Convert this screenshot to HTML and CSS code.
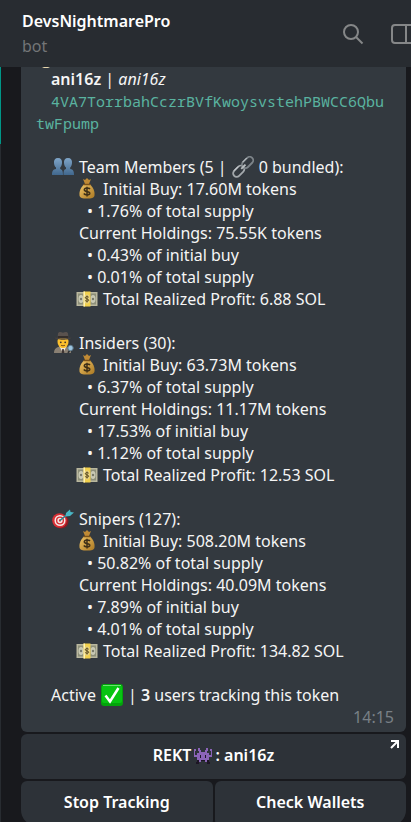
FILE: index.html
```
<!DOCTYPE html>
<html lang="en">
<head>
<meta charset="UTF-8">
<meta name="viewport" content="width=device-width, initial-scale=1.0">
<title>DevsNightmarePro</title>
<link rel="stylesheet" href="styles.css">
</head>
<body>

<!-- icons used more than once -->
<svg class="sprite" aria-hidden="true">
    <defs>
        <linearGradient id="gold" x1="0" y1="0" x2="1" y2="1">
            <stop offset="0" stop-color="#f3c768"/>
            <stop offset="1" stop-color="#a97722"/>
        </linearGradient>
        <linearGradient id="people" x1="0" y1="0" x2="0" y2="1">
            <stop offset="0" stop-color="#7fa5c8"/>
            <stop offset="1" stop-color="#41688e"/>
        </linearGradient>
    </defs>
    <symbol id="bag" viewBox="0 0 22 22">
        <path d="M7 1l2 1 2-2 2 2 2-1-2 5H9z" fill="#c08a35"/>
        <path d="M8.500 6C5 9 3 13 3.500 17.500c.3 2.500 3 3 7.500 3s7.200-.5 7.500-3c.5-4.500-1.500-8.500-5-11.500z" fill="url(#gold)"/>
        <path d="M8 6.500h6" stroke="#7b5219" stroke-width="1.500" stroke-linecap="round"/>
        <path d="M14 11c-1-1.300-5.500-1.500-5.700.7-.2 2.300 5.600 1.300 5.500 3.700-.2 2-4.800 1.900-6 .1M11 8.700v9.800" fill="none" stroke="#3e2f17" stroke-width="1.500"/>
    </symbol>
    <symbol id="bill" viewBox="0 0 22 22">
        <rect x="0.500" y="4" width="21" height="14" fill="#b9b79e"/>
        <rect x="2" y="5.500" width="18" height="11" fill="#8d8f79"/>
        <ellipse cx="5" cy="11" rx="2.500" ry="4" fill="#c9c9b4"/>
        <ellipse cx="17" cy="11" rx="2.500" ry="4" fill="#c9c9b4"/>
        <circle cx="5" cy="11" r="1.200" fill="#77796a"/>
        <circle cx="17" cy="11" r="1.200" fill="#77796a"/>
        <rect x="7.500" y="3.500" width="7" height="15" fill="#f1d04d"/>
        <rect x="7.500" y="3.500" width="1.500" height="15" fill="#fff3b4"/>
        <ellipse cx="11" cy="11" rx="2.800" ry="4.500" fill="#ead68a"/>
        <path d="M12.700 9.200c-1-1-3.500-.8-3.400.6.1 1.500 3.500.8 3.400 2.500-.1 1.200-2.600 1.300-3.500.2M11 7.500v7" fill="none" stroke="#5a4a1c"/>
    </symbol>
</svg>

<div class="app">
    <header class="topbar">
        <div class="peer">
            <h1>DevsNightmarePro</h1>
            <p>bot</p>
        </div>
        <div class="tools">
            <button type="button" aria-label="Search">
                <svg width="22" height="22" viewBox="0 0 22 22" fill="none" stroke="#858788" stroke-width="2">
                    <circle cx="9" cy="9" r="7"/>
                    <path d="M14 14l6.500 6.500"/>
                </svg>
            </button>
            <button type="button" aria-label="Side panel">
                <svg width="26" height="22" viewBox="0 0 26 22" fill="none" stroke="#858788" stroke-width="2">
                    <rect x="2" y="2" width="22" height="18" rx="3"/>
                    <path d="M16 2v18"/>
                </svg>
            </button>
        </div>
    </header>

    <main class="chat">
        <article class="bubble">
            <svg class="peek" width="8" height="1" viewBox="0 0 8 1" aria-hidden="true"><path d="M0 0h8L6 1H2z" fill="#e8d7ae"/></svg>
            <p class="indent"><b>ani16z</b> | <i>ani16z</i></p>
            <p class="address">4VA7TorrbahCczrBVfKwoysvstehPBWCC6QbutwFpump</p>

            <section class="group">
                <h2>
                    <svg class="emoji" viewBox="0 0 22 22" fill="url(#people)" aria-hidden="true">
                        <path d="M6 2c3 0 4.300 2 4 5-.2 2-.8 3.500-1.800 4.500v1.500c2 .6 2.800 2 2.800 6H0c0-4 1-5.500 4-6v-1.500C2.800 10.500 2.200 9 2 7c-.3-3 1-5 4-5z"/>
                        <path d="M16 2c3 0 4.300 2 4 5-.2 2-.8 3.500-1.800 4.500v1.500c3 .5 3.800 2 3.800 6H11.500c0-4 .5-5.500 2.500-6v-1.500c-1.200-1-1.800-2.500-2-4.500-.3-3 1-5 4-5z"/>
                    </svg>
                    <span>Team Members (5 |</span>
                    <svg class="emoji" viewBox="0 0 22 22" fill="none" aria-hidden="true">
                        <g transform="rotate(-45 11 11)">
                            <rect x="-1.500" y="7.500" width="13" height="7" rx="3.500" stroke="#a3a8ac" stroke-width="1.800"/>
                            <rect x="11" y="7.500" width="13" height="7" rx="3.500" stroke="#7d8489" stroke-width="1.800"/>
                            <path d="M2 7.200h6M14 7.200h6" stroke="#e3e6e8" stroke-width=".8"/>
                            <path d="M8.500 11h6" stroke="#b9bec1" stroke-width="1.800"/>
                        </g>
                    </svg>
                    <span>0 bundled):</span>
                </h2>
                <p class="line"><svg class="emoji"><use href="#bag"/></svg>Initial Buy: 17.60M tokens</p>
                <p class="sub">• 1.76% of total supply</p>
                <p class="plain">Current Holdings: 75.55K tokens</p>
                <p class="sub">• 0.43% of initial buy</p>
                <p class="sub">• 0.01% of total supply</p>
                <p class="line"><svg class="emoji"><use href="#bill"/></svg>Total Realized Profit: 6.88 SOL</p>
            </section>

            <section class="group">
                <h2>
                    <svg class="emoji" viewBox="0 0 22 22" aria-hidden="true">
                        <path d="M2 21c0-4 2.500-6 6-6.500h6c3.500.5 5 2.500 5 6.500z" fill="#8a8073"/>
                        <path d="M7.500 14.500h7L11 21z" fill="#f1ede4"/>
                        <path d="M10.300 17h1.400l.6 4h-2.600z" fill="#3d3432"/>
                        <ellipse cx="11" cy="10" rx="5.500" ry="6.200" fill="#fbc02d"/>
                        <path d="M6 1.500c1-2 3-1.500 5-.8 2-.7 4-1.200 5 .8l.5 4.500h-11z" fill="#5a524e"/>
                        <path d="M5.700 4.200h10.600v1.600H5.700z" fill="#2c2725"/>
                        <path d="M2.500 5.500c3 1 14 1 17 0-1 3-16 3-17 0z" fill="#484140"/>
                        <circle cx="8.800" cy="10.300" r=".9" fill="#40352c"/>
                        <circle cx="13.200" cy="10.300" r=".9" fill="#40352c"/>
                        <path d="M9 13.300q2 1 4 0" fill="none" stroke="#79541e"/>
                        <path d="M17.500 18.500L16 21" stroke="#303234" stroke-width="1.500"/>
                        <circle cx="18.500" cy="16" r="2.700" fill="#9cc6e2" stroke="#5d7889"/>
                    </svg>
                    <span>Insiders (30):</span>
                </h2>
                <p class="line"><svg class="emoji"><use href="#bag"/></svg>Initial Buy: 63.73M tokens</p>
                <p class="sub">• 6.37% of total supply</p>
                <p class="plain">Current Holdings: 11.17M tokens</p>
                <p class="sub">• 17.53% of initial buy</p>
                <p class="sub">• 1.12% of total supply</p>
                <p class="line"><svg class="emoji"><use href="#bill"/></svg>Total Realized Profit: 12.53 SOL</p>
            </section>

            <section class="group">
                <h2>
                    <svg class="emoji" viewBox="0 0 22 22" aria-hidden="true">
                        <ellipse cx="9" cy="13.500" rx="7.500" ry="7" fill="#8e1a20"/>
                        <ellipse cx="7.500" cy="12.500" rx="7.300" ry="7.300" fill="#d92f35"/>
                        <circle cx="8" cy="12.500" r="4.800" fill="none" stroke="#f5e9e6" stroke-width="1.500"/>
                        <circle cx="8" cy="12.500" r="1.900" fill="none" stroke="#f5e9e6" stroke-width="1.500"/>
                        <path d="M8 12.500l9-7.500" stroke="#2b8191" stroke-width="1.600"/>
                        <path d="M14 5l4-3.500.5 2.500 3.500.5-4 3.500-4.500.5z" fill="#49b6c5"/>
                    </svg>
                    <span>Snipers (127):</span>
                </h2>
                <p class="line"><svg class="emoji"><use href="#bag"/></svg>Initial Buy: 508.20M tokens</p>
                <p class="sub">• 50.82% of total supply</p>
                <p class="plain">Current Holdings: 40.09M tokens</p>
                <p class="sub">• 7.89% of initial buy</p>
                <p class="sub">• 4.01% of total supply</p>
                <p class="line"><svg class="emoji"><use href="#bill"/></svg>Total Realized Profit: 134.82 SOL</p>
            </section>

            <p class="status">
                <span>Active</span>
                <svg class="emoji" viewBox="0 0 22 22" aria-hidden="true">
                    <rect width="22" height="22" rx="3" fill="#03a30b"/>
                    <rect x="1" y="1" width="20" height="18" rx="2" fill="#08c412"/>
                    <path d="M2 1.500h18" stroke="#6be36f"/>
                    <path d="M4.500 11.500l4.500 6L17.500 4" fill="none" stroke="#fff" stroke-width="2.500"/>
                </svg>
                <span>| <b>3</b> users tracking this token</span>
            </p>
            <time>14:15</time>
        </article>

        <div class="keyboard">
            <button type="button" class="wide">
                REKT<svg class="alien" viewBox="0 0 20 18" aria-hidden="true">
                    <path d="M5 1h2v2h1v2h4V3h1V1h2v3h-1v2h2v2h2V4h-1V2h2v8h-3v3h-2v2h-2v-2H8v2H6v-2H4v-3H1V2h2v2H2v4h2V6h2V4H5z" fill="#8b64b8"/>
                    <path d="M7 8h1v3H7zM12 8h1v3h-1zM4 13h2v4H3v-2h1zM14 13h2v2h1v2h-3zM8 13h4v1H8z" fill="#1d1525"/>
                </svg>: ani16z
                <svg class="out" width="10" height="10" viewBox="0 0 10 10" fill="none" stroke="#fff" stroke-width="2" aria-hidden="true"><path d="M1 1h7v7M8 1L1 8"/></svg>
            </button>
            <button type="button">Stop Tracking</button>
            <button type="button">Check Wallets</button>
        </div>
    </main>
</div>

</body>
</html>
```
FILE: styles.css
```
* {
    box-sizing: border-box;
}
body {
    margin: 0;
    background-color: #18191d;
    color: #f5f5f5;
    font-family: "Noto Sans", "Open Sans", sans-serif;
    font-size: 16px;
    line-height: 22px;
}
h1, h2, p {
    margin: 0;
    font-size: 16px;
}
b {
    font-weight: 600;
}
button {
    border: none;
    padding: 0;
    color: #fff;
    font: inherit;
    cursor: pointer;
}
.sprite {
    position: absolute;
    width: 0;
    height: 0;
}
.app {
    display: flex;
    flex-direction: column;
    height: 100vh;
    overflow: hidden;
}

/* Header */
.topbar {
    display: flex;
    flex: none;
    justify-content: space-between;
    height: 67px;
    padding: 10px 0 0 22px;
    background-color: #282c31;
}
.topbar h1 {
    font-weight: 600;
    color: #fff;
}
.peer p {
    padding-top: 3px;
    color: #737577;
}
.tools {
    display: flex;
    gap: 26px;
    align-items: center;
    margin-right: -5px;
    padding-bottom: 10px;
}
.tools button {
    height: 22px;
    background: none;
}
.tools svg {
    display: block;
}

/* Chat */
.chat {
    position: relative;
    flex: none;
    padding: 0 5px 0 21px;
}
.chat::before {
    content: "";
    position: absolute;
    top: 0;
    left: 0;
    width: 1px;
    height: 100%;
    background: linear-gradient(#009687 77px, #282c31 77px);
}
.bubble {
    position: relative;
    padding: 1px 15px 4px;
    border-radius: 0 0 6px 6px;
    background-color: #33393f;
}
.peek {
    position: absolute;
    top: 0;
    left: 21px;
}
.indent, .status {
    padding-left: 15px;
}
.address {
    color: #5ab3a0;
    font-family: "Noto Sans Mono", "DejaVu Sans Mono", monospace;
    font-size: 15px;
    text-indent: 15px;
    word-break: break-all;
}
.group {
    padding: 22px 0 0 15px;
}
.group h2 {
    display: flex;
    gap: 5px;
    padding-left: 1px;
    font-weight: 400;
}
.emoji {
    flex: none;
    width: 22px;
    height: 22px;
}
.line {
    display: flex;
    gap: 5px;
    padding-left: 25px;
}
.plain {
    padding-left: 28px;
}
.sub {
    padding-left: 36px;
}
.status {
    display: flex;
    gap: 5px;
    padding-top: 22px;
}
.bubble time {
    display: block;
    margin-right: -3px;
    color: #798086;
    font-size: 16px;
    text-align: right;
}

/* Inline keyboard */
.keyboard {
    display: grid;
    grid-template-columns: 1fr 1fr;
    gap: 2px;
    padding-top: 2px;
}
.keyboard button {
    position: relative;
    height: 45px;
    padding-bottom: 3px;
    border-radius: 6px;
    background-color: #2d3238;
    font-weight: 600;
}
.keyboard .wide {
    grid-column: 1 / 3;
}
.keyboard button:nth-child(2) {
    border-bottom-left-radius: 16px;
}
.keyboard button:nth-child(3) {
    border-bottom-right-radius: 16px;
}
.keyboard button:hover {
    background-color: #363c43;
}
.alien {
    width: 20px;
    height: 18px;
    margin: 0 2px;
    vertical-align: -4px;
}
.out {
    position: absolute;
    top: 6px;
    right: 6px;
}
```
